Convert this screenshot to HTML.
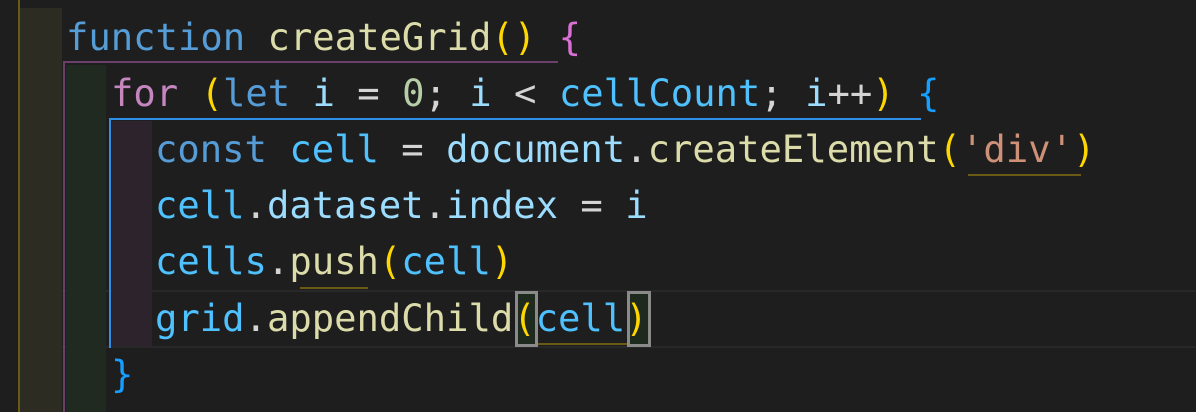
<!DOCTYPE html>
<html><head><meta charset="utf-8"><style>
html,body{margin:0;padding:0;}
body{width:1196px;height:412px;background:#1e1e1e;position:relative;overflow:hidden;font-family:"DejaVu Sans Mono","Liberation Mono",monospace;font-size:37.2px;}
.a{position:absolute;}
.l{position:absolute;white-space:pre;line-height:56px;height:56px;color:#d4d4d4;}
.k{color:#569cd6}.f{color:#dcdcaa}.c{color:#c586c0}.p{color:#ffd700}.b1{color:#da70d6}.b2{color:#179fff}
.v{color:#9cdcfe}.cv{color:#4fc1ff}.n{color:#b5cea8}.s{color:#ce9178}
</style></head><body>
<div class="a" style="left:20px;top:290px;width:1176px;height:54px;border-top:2px solid #282828;border-bottom:2px solid #282828;"></div>
<div class="a" style="left:18px;top:0;width:2px;height:412px;background:#6b5a14"></div>
<div class="a" style="left:20px;top:8px;width:42px;height:404px;background:#2c2c22"></div>
<div class="a" style="left:63px;top:61px;width:495px;height:2px;background:#6a3f6a"></div>
<div class="a" style="left:63px;top:61px;width:2px;height:351px;background:#6a3f6a"></div>
<div class="a" style="left:66px;top:65px;width:40px;height:347px;background:#212a21"></div>
<div class="a" style="left:109px;top:118px;width:812px;height:2px;background:#2f8fe8"></div>
<div class="a" style="left:109px;top:118px;width:2px;height:230px;background:#2f8fe8"></div>
<div class="a" style="left:112px;top:121px;width:40px;height:225px;background:#2c232d"></div>
<div class="a" style="left:968px;top:174px;width:113px;height:2px;background:#6b5a14"></div>
<div class="a" style="left:300px;top:287px;width:68px;height:2px;background:#6b5a14"></div>
<div class="a" style="left:536px;top:343px;width:92px;height:2px;background:#6b5a14"></div>
<div class="a" style="left:515px;top:291px;width:17px;height:50px;border:3px solid #8a8a8a;background:#1d2a1d"></div>
<div class="a" style="left:627px;top:291px;width:18px;height:50px;border:3px solid #8a8a8a;background:#1d2a1d"></div>
<div class="l" style="left:66px;top:9px"><span class="k">function</span> <span class="f">createGrid</span><span class="p">()</span> <span class="b1">{</span></div>
<div class="l" style="left:111px;top:65px"><span class="c">for</span> <span class="p">(</span><span class="k">let</span> <span class="v">i</span> = <span class="n">0</span>; <span class="v">i</span> &lt; <span class="cv">cellCount</span>; <span class="v">i</span>++<span class="p">)</span> <span class="b2">{</span></div>
<div class="l" style="left:155px;top:121px"><span class="k">const</span> <span class="cv">cell</span> = <span class="v">document</span>.<span class="f">createElement</span><span class="p">(</span><span class="s">'div'</span><span class="p">)</span></div>
<div class="l" style="left:155px;top:177px"><span class="cv">cell</span>.<span class="v">dataset</span>.<span class="v">index</span> = <span class="v">i</span></div>
<div class="l" style="left:155px;top:233px"><span class="cv">cells</span>.<span class="f">push</span><span class="p">(</span><span class="cv">cell</span><span class="p">)</span></div>
<div class="l" style="left:155px;top:290px"><span class="cv">grid</span>.<span class="f">appendChild</span><span class="p">(</span><span class="cv">cell</span><span class="p">)</span></div>
<div class="l" style="left:111px;top:346px"><span class="b2">}</span></div>
</body></html>
